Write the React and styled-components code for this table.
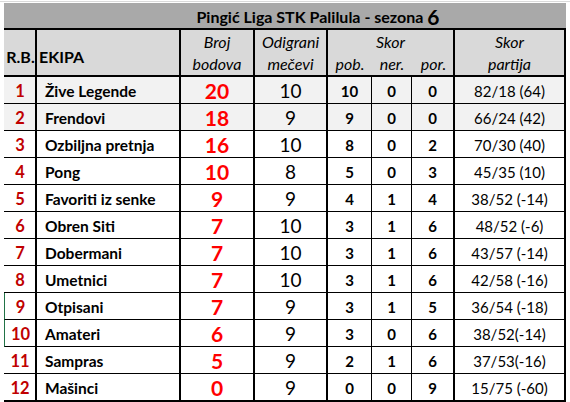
import React from "react";
import styled, { createGlobalStyle } from "styled-components";

const Global = createGlobalStyle`
  html, body { margin: 0; padding: 0; background: #ffffff; }
  body { font-family: "Lato", "Liberation Sans", sans-serif; color: #000; }
  * { box-sizing: border-box; }
`;

const Page = styled.div`
  width: 570px;
  height: 402px;
  overflow: hidden;
  padding: 3px 0 0 4px;
  background-color: #ffffff;
  background-image: linear-gradient(#dadada, #dadada);
  background-size: 100% 1px;
  background-repeat: no-repeat;
  background-position: 0 1px;
`;

const Sheet = styled.div`
  display: grid;
  grid-template-columns: 33px 144px 74px 73px 44px 40px 43px 111px;
  width: 562px;
`;

const Title = styled.div`
  grid-column: 1 / -1;
  height: 27px;
  background: #a9a9a9;
  border-bottom: 2px solid #000;
  display: flex;
  align-items: center;
  justify-content: center;
  padding-left: 66px;
  padding-top: 1px;
  font-weight: 700;
  font-size: 16px;
  white-space: pre;
`;

const Big = styled.span`
  font-size: 21px;
  line-height: 1;
  margin-left: 4px;
`;

const Head = styled.div`
  grid-column: ${(p) => p.$span ? `span ${p.$span}` : "auto"};
  height: 47px;
  background: #d9d9d9;
  border-bottom: 2px solid #000;
  border-right: 2px solid #000;
  display: flex;
  flex-direction: column;
  align-items: ${(p) => (p.$left ? "flex-start" : "center")};
  justify-content: ${(p) => (p.$bottom ? "flex-end" : "center")};
  padding: ${(p) => (p.$bottom ? "0 0 7px 2px" : "0")};
  font-size: 16px;
  font-style: ${(p) => (p.$bold ? "normal" : "italic")};
  font-weight: ${(p) => (p.$bold ? 700 : 400)};
  line-height: 22px;
  text-align: center;
`;

const SubLabels = styled.div`
  display: grid;
  grid-template-columns: 44px 40px 43px;
  width: 100%;
  padding-right: 2px;
`;

const SubLabel = styled.span`
  text-align: center;
`;

const Cell = styled.div`
  height: ${(p) => (p.$last ? 28 : 27)}px;
  background: ${(p) => (p.$shade ? "#f2f2f2" : "#ffffff")};
  border-bottom: ${(p) => (p.$last ? 2 : 1)}px solid #000;
  border-right: ${(p) => (p.$thin ? 1 : 2)}px solid #000;
  border-left: ${(p) => (p.$edge ? `1px solid ${p.$edge}` : "none")};
  display: flex;
  align-items: center;
  justify-content: center;
  padding-top: 1px;
  white-space: nowrap;
`;

const Rank = styled(Cell)`
  color: #c00000;
  font-weight: 700;
  font-size: 16.5px;
  padding-left: 1px;
`;

const Team = styled(Cell)`
  justify-content: flex-start;
  padding-left: 8px;
  font-weight: 700;
  font-size: 15.5px;
`;

const Points = styled(Cell)`
  color: #ff0000;
  font-weight: 700;
  font-size: 21px;
`;

const Played = styled(Cell)`
  font-size: 19px;
`;

const Stat = styled(Cell)`
  font-weight: 700;
  font-size: 15px;
`;

const Score = styled(Cell)`
  font-size: 15px;
`;

const rows = [
  ["1", "Žive Legende", 20, 10, 10, 0, 0, "82/18 (64)"],
  ["2", "Frendovi", 18, 9, 9, 0, 0, "66/24 (42)"],
  ["3", "Ozbiljna pretnja", 16, 10, 8, 0, 2, "70/30 (40)"],
  ["4", "Pong", 10, 8, 5, 0, 3, "45/35 (10)"],
  ["5", "Favoriti iz senke", 9, 9, 4, 1, 4, "38/52 (-14)"],
  ["6", "Obren Siti", 7, 10, 3, 1, 6, "48/52 (-6)"],
  ["7", "Dobermani", 7, 10, 3, 1, 6, "43/57 (-14)"],
  ["8", "Umetnici", 7, 10, 3, 1, 6, "42/58 (-16)"],
  ["9", "Otpisani", 7, 9, 3, 1, 5, "36/54 (-18)"],
  ["10", "Amateri", 6, 9, 3, 0, 6, "38/52(-14)"],
  ["11", "Sampras", 5, 9, 2, 1, 6, "37/53(-16)"],
  ["12", "Mašinci", 0, 9, 0, 0, 9, "15/75 (-60)"],
];

export default function App() {
  return (
    <>
      <Global />
      <Page>
        <Sheet>
          <Title>
            Pingić Liga STK Palilula - sezona<Big>6</Big>
          </Title>
          <Head $bold $bottom>R.B.</Head>
          <Head $bold $bottom $left>EKIPA</Head>
          <Head>
            <span>Broj</span>
            <span>bodova</span>
          </Head>
          <Head>
            <span>Odigrani</span>
            <span>mečevi</span>
          </Head>
          <Head $span={3}>
            <span>Skor</span>
            <SubLabels>
              <SubLabel>pob.</SubLabel>
              <SubLabel>ner.</SubLabel>
              <SubLabel>por.</SubLabel>
            </SubLabels>
          </Head>
          <Head>
            <span>Skor</span>
            <span>partija</span>
          </Head>
          {rows.map((r, i) => {
            const shade = i < 2;
            const last = i === rows.length - 1;
            const edge = i === 8 || i === 9 ? "#217346" : null;
            return (
              <React.Fragment key={r[0]}>
                <Rank $shade={shade} $last={last} $edge={edge}>{r[0]}</Rank>
                <Team $shade={shade} $last={last}>{r[1]}</Team>
                <Points $shade={shade} $last={last}>{r[2]}</Points>
                <Played $shade={shade} $last={last}>{r[3]}</Played>
                <Stat $shade={shade} $last={last} $thin>{r[4]}</Stat>
                <Stat $shade={shade} $last={last} $thin>{r[5]}</Stat>
                <Stat $shade={shade} $last={last}>{r[6]}</Stat>
                <Score $shade={shade} $last={last}>{r[7]}</Score>
              </React.Fragment>
            );
          })}
        </Sheet>
      </Page>
    </>
  );
}
